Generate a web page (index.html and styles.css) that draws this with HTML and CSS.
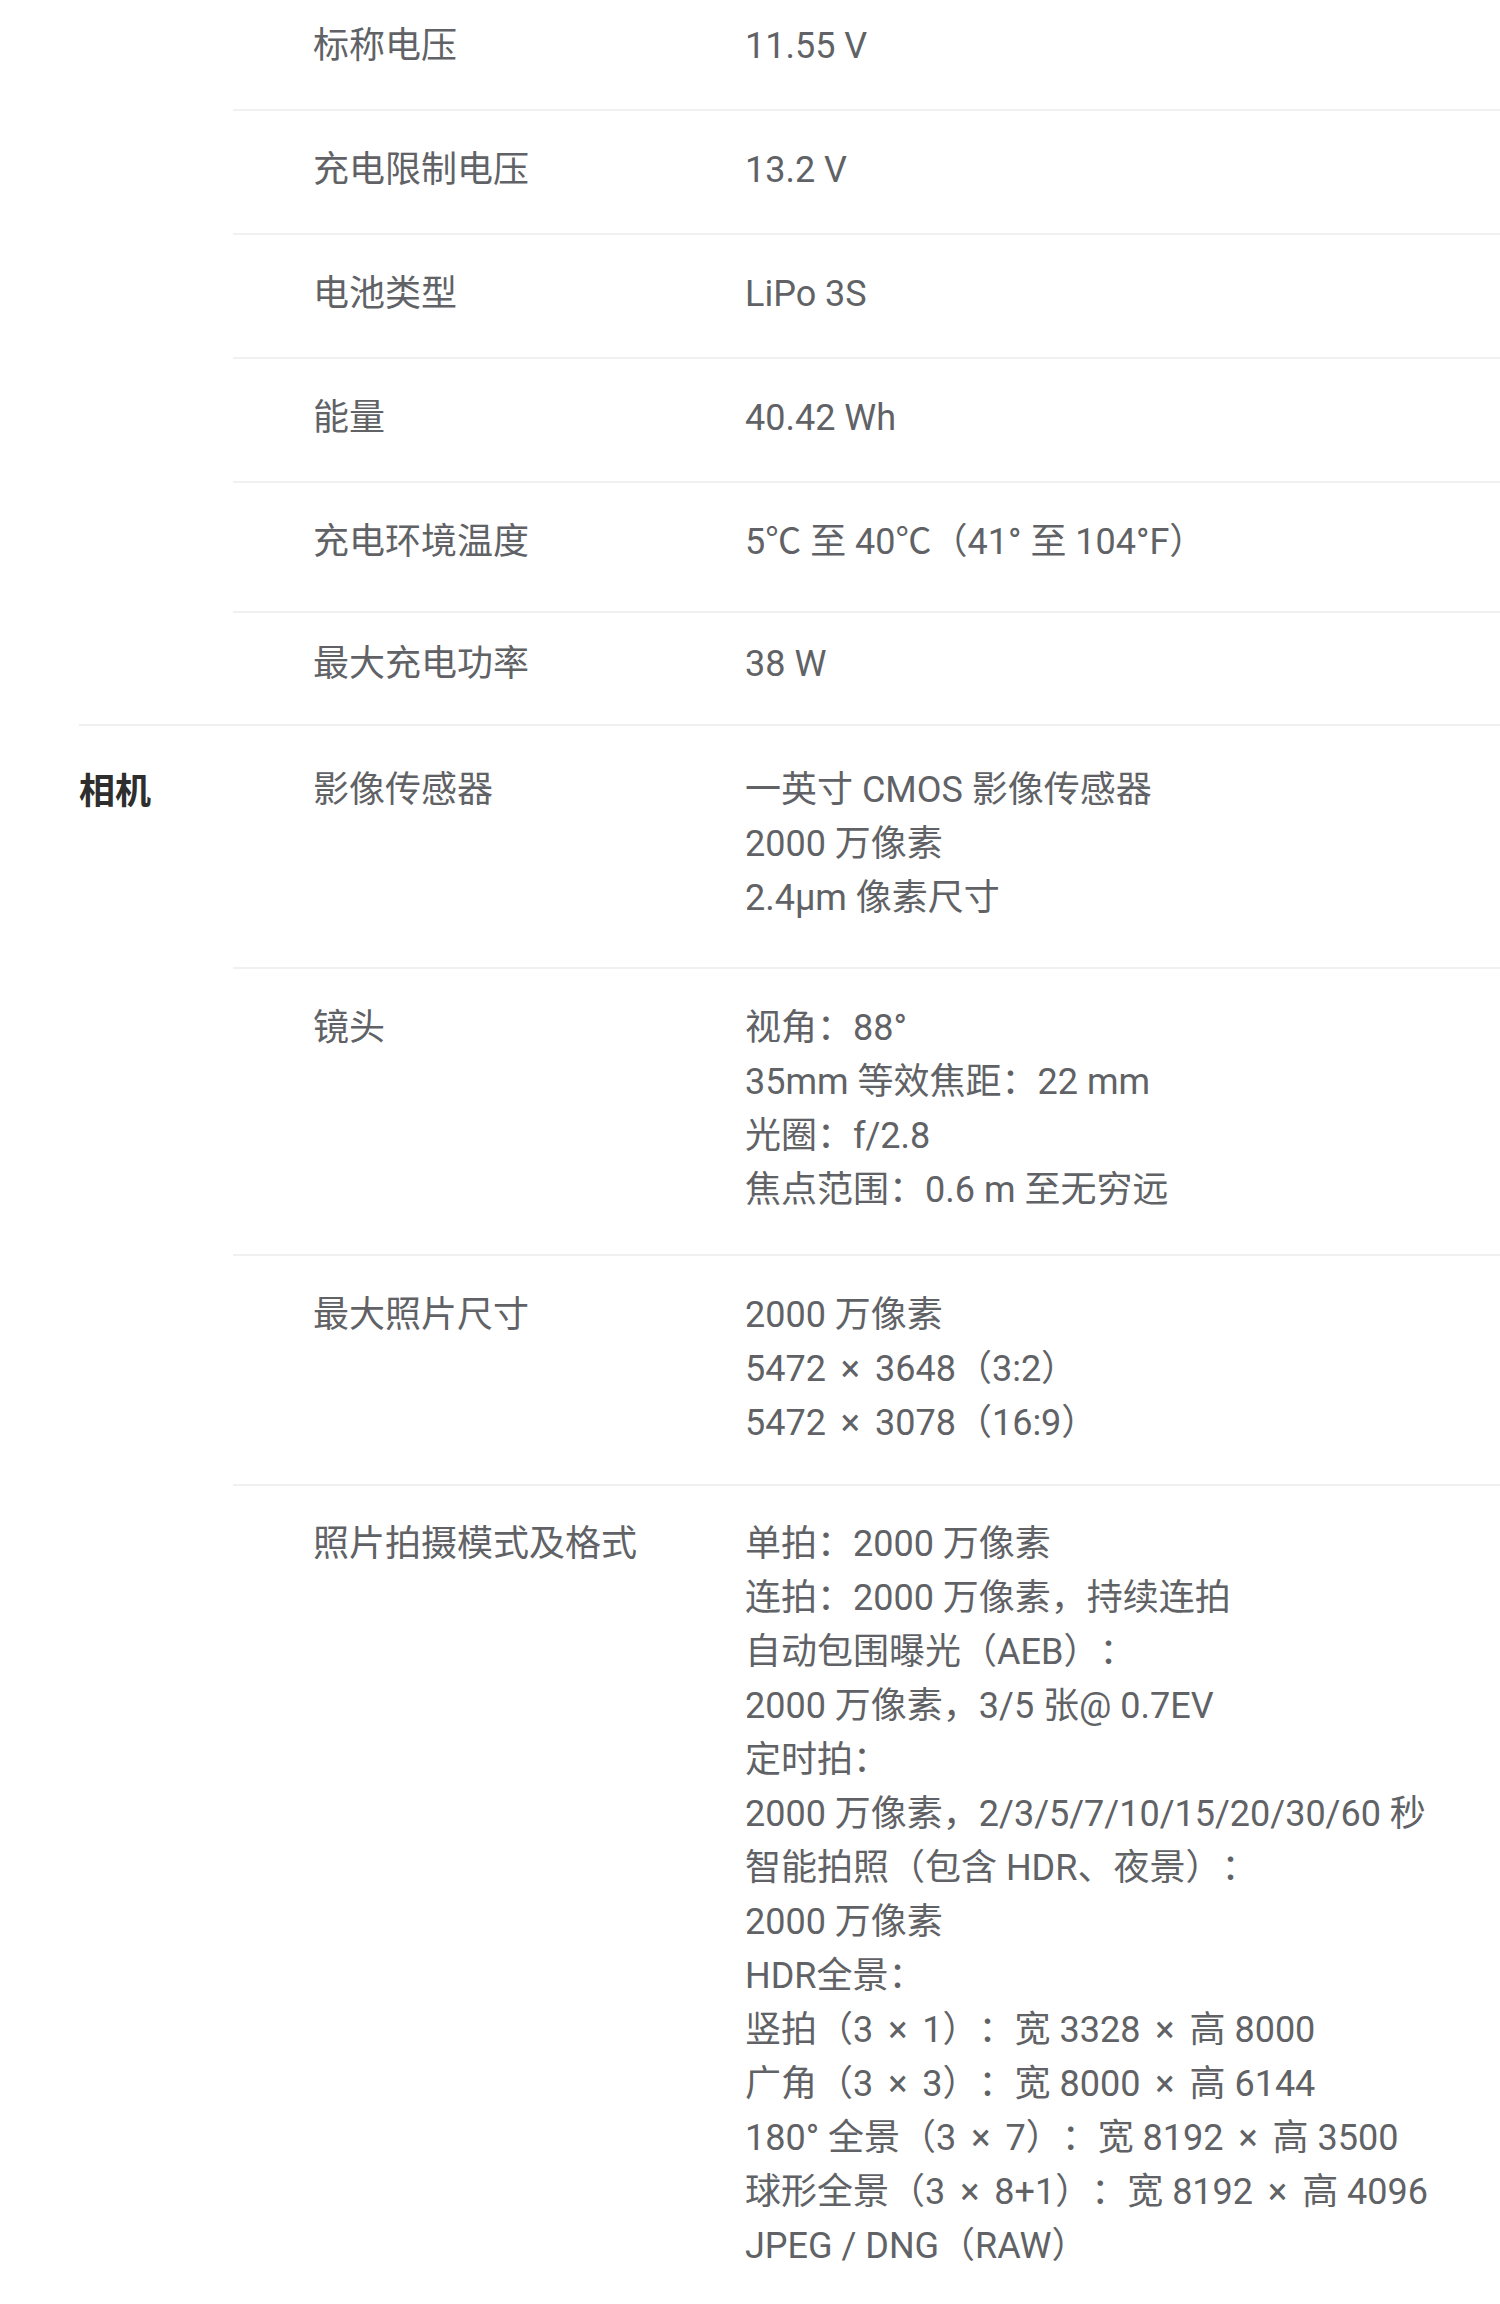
FILE: index.html
```html
<!DOCTYPE html>
<html lang="zh-CN">
<head>
<meta charset="utf-8">
<title>规格参数</title>
<link rel="stylesheet" href="styles.css">
</head>
<body>
<main class="specs">
  <section class="cat">
    <div class="cat-name"></div>
    <div class="rows">
      <div class="row">
        <div class="label">标称电压</div>
        <div class="value"><span class="ln">11.55 V</span></div>
      </div>
      <div class="row">
        <div class="label">充电限制电压</div>
        <div class="value"><span class="ln">13.2 V</span></div>
      </div>
      <div class="row">
        <div class="label">电池类型</div>
        <div class="value"><span class="ln">LiPo 3S</span></div>
      </div>
      <div class="row">
        <div class="label">能量</div>
        <div class="value"><span class="ln">40.42 Wh</span></div>
      </div>
      <div class="row row-temp">
        <div class="label">充电环境温度</div>
        <div class="value"><span class="ln">5℃ 至 40℃（41° 至 104°F）</span></div>
      </div>
      <div class="row row-last">
        <div class="label">最大充电功率</div>
        <div class="value"><span class="ln">38 W</span></div>
      </div>
    </div>
  </section>

  <section class="cat">
    <div class="cat-name cat-name-first">相机</div>
    <div class="rows">
      <div class="row row-first">
        <div class="label">影像传感器</div>
        <div class="value">
          <span class="ln">一英寸 CMOS 影像传感器</span>
          <span class="ln">2000 万像素</span>
          <span class="ln">2.4μm 像素尺寸</span>
        </div>
      </div>
      <div class="row row-lens">
        <div class="label">镜头</div>
        <div class="value">
          <span class="ln">视角：88°</span>
          <span class="ln">35mm 等效焦距：22 mm</span>
          <span class="ln">光圈：f/2.8</span>
          <span class="ln">焦点范围：0.6 m 至无穷远</span>
        </div>
      </div>
      <div class="row row-size">
        <div class="label">最大照片尺寸</div>
        <div class="value">
          <span class="ln">2000 万像素</span>
          <span class="ln">5472 <span class="x">×</span> 3648（3:2）</span>
          <span class="ln">5472 <span class="x">×</span> 3078（16:9）</span>
        </div>
      </div>
      <div class="row row-end">
        <div class="label">照片拍摄模式及格式</div>
        <div class="value">
          <span class="ln">单拍：2000 万像素</span>
          <span class="ln">连拍：2000 万像素，持续连拍</span>
          <span class="ln">自动包围曝光（AEB）：</span>
          <span class="ln">2000 万像素，3/5 张@ 0.7EV</span>
          <span class="ln">定时拍：</span>
          <span class="ln">2000 万像素，2/3/5/7/10/15/20/30/60 秒</span>
          <span class="ln">智能拍照（包含 HDR、夜景）：</span>
          <span class="ln">2000 万像素</span>
          <span class="ln">HDR全景：</span>
          <span class="ln">竖拍（3 <span class="x">×</span> 1）：宽 3328 <span class="x">×</span> 高 8000</span>
          <span class="ln">广角（3 <span class="x">×</span> 3）：宽 8000 <span class="x">×</span> 高 6144</span>
          <span class="ln">180° 全景（3 <span class="x">×</span> 7）：宽 8192 <span class="x">×</span> 高 3500</span>
          <span class="ln">球形全景（3 <span class="x">×</span> 8+1）：宽 8192 <span class="x">×</span> 高 4096</span>
          <span class="ln">JPEG / DNG（RAW）</span>
        </div>
      </div>
    </div>
  </section>
</main>
</body>
</html>
```

FILE: styles.css
```css
html, body {
  margin: 0;
  padding: 0;
  background: #ffffff;
}

body {
  font-family: Roboto, "Noto Sans CJK SC", sans-serif;
  font-size: 36px;
  line-height: 54px;
  color: #606266;
  text-spacing-trim: space-all;
}

.specs {
  margin-top: -13px;
  padding-left: 79px;
}

.cat {
  display: flex;
  border-bottom: 2px solid #f0f0f0;
}

.cat:last-child {
  border-bottom: none;
}

.cat-name {
  flex: 0 0 154px;
  font-family: "Noto Sans CJK SC", sans-serif;
  font-weight: 700;
  color: #2e2e2e;
}

.cat-name-first {
  padding-top: 35px;
}

.rows {
  flex: 1;
  display: flex;
  flex-direction: column;
}

.row {
  display: flex;
  padding: 32px 0 36px 80px;
  border-bottom: 2px solid #f0f0f0;
}

.rows .row:last-child {
  border-bottom: none;
}

.row-temp {
  padding-bottom: 42px;
}

.row-last {
  padding-top: 24px;
  padding-bottom: 33px;
}

.row-first {
  padding-top: 37px;
  padding-bottom: 42px;
}

.row-lens {
  padding-bottom: 37px;
}

.row-size {
  padding-bottom: 34px;
}

.row-end {
  padding-top: 31px;
}

.label {
  flex: 0 0 432px;
}

.value {
  flex: 1;
  display: flex;
  flex-direction: column;
}

.ln {
  display: block;
  white-space: nowrap;
}

.x {
  padding: 0 6px;
}
```
